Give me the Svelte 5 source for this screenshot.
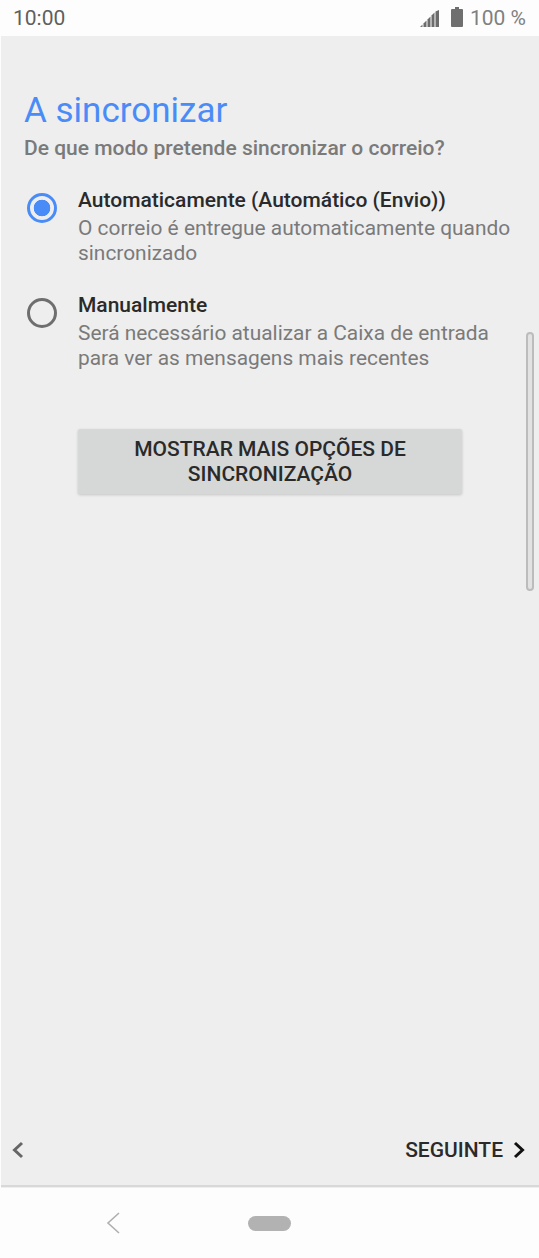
<script>
  let options = [
    {
      title: 'Automaticamente (Automático (Envio))',
      text: 'O correio é entregue automaticamente quando sincronizado',
      checked: true
    },
    {
      title: 'Manualmente',
      text: 'Será necessário atualizar a Caixa de entrada para ver as mensagens mais recentes',
      checked: false
    }
  ]
</script>

<main class="phone">
  <header class="status">
    <span class="time">10:00</span>
    <div class="status-right">
      <svg class="signal" width="19" height="17" viewBox="0 0 19 17">
        <path d="M0 17 L2.5 14.5 V17 Z" fill="#777" />
        <path d="M3.5 13.5 L6.5 10.5 V17 H3.5 Z" fill="#6c6c6c" />
        <path d="M7.5 9.5 L10.5 6.5 V17 H7.5 Z" fill="#6c6c6c" />
        <path d="M11.5 5.5 L14.5 2.5 V17 H11.5 Z" fill="#6c6c6c" />
        <path d="M15.5 1.5 L19 0 V17 H15.5 Z" fill="#6c6c6c" />
      </svg>
      <svg class="battery" width="12" height="20" viewBox="0 0 12 20">
        <path d="M4 0 H8 V2 H11 A1 1 0 0 1 12 3 V19 A1 1 0 0 1 11 20 H1 A1 1 0 0 1 0 19 V3 A1 1 0 0 1 1 2 H4 Z" fill="#6f6f6f" />
      </svg>
      <span class="pct">100 %</span>
    </div>
  </header>

  <section class="content">
    <h1>A sincronizar</h1>
    <p class="sub">De que modo pretende sincronizar o correio?</p>

    <div class="options">
      {#each options as o}
        <div class="option">
          <span class="radio" class:checked={o.checked}></span>
          <div class="option-text">
            <div class="option-title">{o.title}</div>
            <div class="option-desc">{o.text}</div>
          </div>
        </div>
      {/each}
    </div>

    <button class="more">MOSTRAR MAIS OPÇÕES DE SINCRONIZAÇÃO</button>

    <div class="scrollbar"></div>
  </section>

  <footer class="wizard">
    <svg width="14" height="18" viewBox="0 0 14 18">
      <path d="M11 2 L3.5 9 L11 16" fill="none" stroke="#666" stroke-width="3" />
    </svg>
    <div class="next">
      <span>SEGUINTE</span>
      <svg width="14" height="18" viewBox="0 0 14 18">
        <path d="M3 2 L10.5 9 L3 16" fill="none" stroke="#111" stroke-width="3" />
      </svg>
    </div>
  </footer>

  <nav class="navbar">
    <svg class="nav-back" width="14" height="22" viewBox="0 0 14 22">
      <path d="M13 1 L2 11 L13 21" fill="none" stroke="#b0b0b0" stroke-width="1.6" />
    </svg>
    <span class="home"></span>
  </nav>
</main>

<style>
  :global(body) {
    margin: 0;
    background: #fff;
  }

  .phone {
    width: 539px;
    height: 1258px;
    display: flex;
    flex-direction: column;
    font-family: Roboto, "Liberation Sans", sans-serif;
    background: #fdfdfd;
    overflow: hidden;
  }

  .status {
    height: 36px;
    flex: none;
    display: flex;
    align-items: center;
    justify-content: space-between;
    padding: 0 13px 0 13px;
    color: #6b6b6b;
    font-size: 21px;
  }

  .time {
    color: #5f5f5f;
  }

  .status-right {
    display: flex;
    align-items: center;
  }

  .signal {
    margin-right: 12px;
    margin-top: 1px;
  }

  .battery {
    margin-right: 7px;
    margin-top: -2px;
  }

  .pct {
    color: #808080;
  }

  .content {
    position: relative;
    flex: 1;
    margin-left: 1px;
    background: #eeeeee;
    padding: 54px 0 0 23px;
    min-height: 0;
  }

  h1 {
    margin: 0;
    font-size: 35px;
    font-weight: 400;
    line-height: 42px;
    color: #4a8cf7;
  }

  .sub {
    margin: 4px 0 0;
    font-size: 21px;
    font-weight: 500;
    line-height: 24px;
    color: #7a7a7a;
  }

  .options {
    margin-top: 26px;
    display: flex;
    flex-direction: column;
    gap: 25px;
  }

  .option {
    display: flex;
    align-items: flex-start;
  }

  .radio {
    flex: none;
    box-sizing: border-box;
    width: 30px;
    height: 30px;
    margin: 7px 21px 0 3px;
    border-radius: 50%;
    border: 3.5px solid #6e6e6e;
  }

  .radio.checked {
    border-color: #4a8cf7;
    background: radial-gradient(circle, #4a8cf7 0 8px, transparent 8.6px);
  }

  .option-text {
    width: 436px;
  }

  .option-title {
    margin-bottom: 1px;
    font-size: 21px;
    font-weight: 500;
    line-height: 29px;
    color: #2a2a2a;
  }

  .option-desc {
    font-size: 20.9px;
    line-height: 25px;
    color: #7a7a7a;
  }

  .more {
    display: block;
    box-sizing: border-box;
    width: 384px;
    height: 65px;
    margin: 58px 0 0 54px;
    padding: 0 30px;
    border: none;
    border-radius: 2px;
    background: #d6d8d8;
    box-shadow: 0 1px 3px rgba(0, 0, 0, 0.18);
    color: #2a2a2a;
    font-family: inherit;
    font-size: 21px;
    font-weight: 500;
    line-height: 25px;
    text-align: center;
  }

  .scrollbar {
    position: absolute;
    top: 296px;
    left: 525px;
    box-sizing: border-box;
    width: 8px;
    height: 259px;
    border: 2px solid #bcbcbc;
    border-radius: 4px;
    background: #e2e2e2;
  }

  .wizard {
    position: absolute;
    top: 1114px;
    left: 1px;
    width: 538px;
    height: 73px;
    box-sizing: border-box;
    display: flex;
    align-items: center;
    justify-content: space-between;
    padding: 0 13px 0 10px;
    background: #eeeeee;
    border-bottom: 2px solid #d8d8d8;
  }

  .next {
    display: flex;
    align-items: center;
    gap: 9px;
    font-size: 21px;
    font-weight: 500;
    color: #2a2a2a;
  }

  .navbar {
    flex: none;
    height: 70px;
    display: flex;
    align-items: center;
    background: #fdfdfd;
    padding-bottom: 0;
  }

  .nav-back {
    margin-left: 106px;
  }

  .home {
    margin-left: 128px;
    width: 43px;
    height: 15px;
    border-radius: 8px;
    background: #b2b2b2;
  }
</style>
